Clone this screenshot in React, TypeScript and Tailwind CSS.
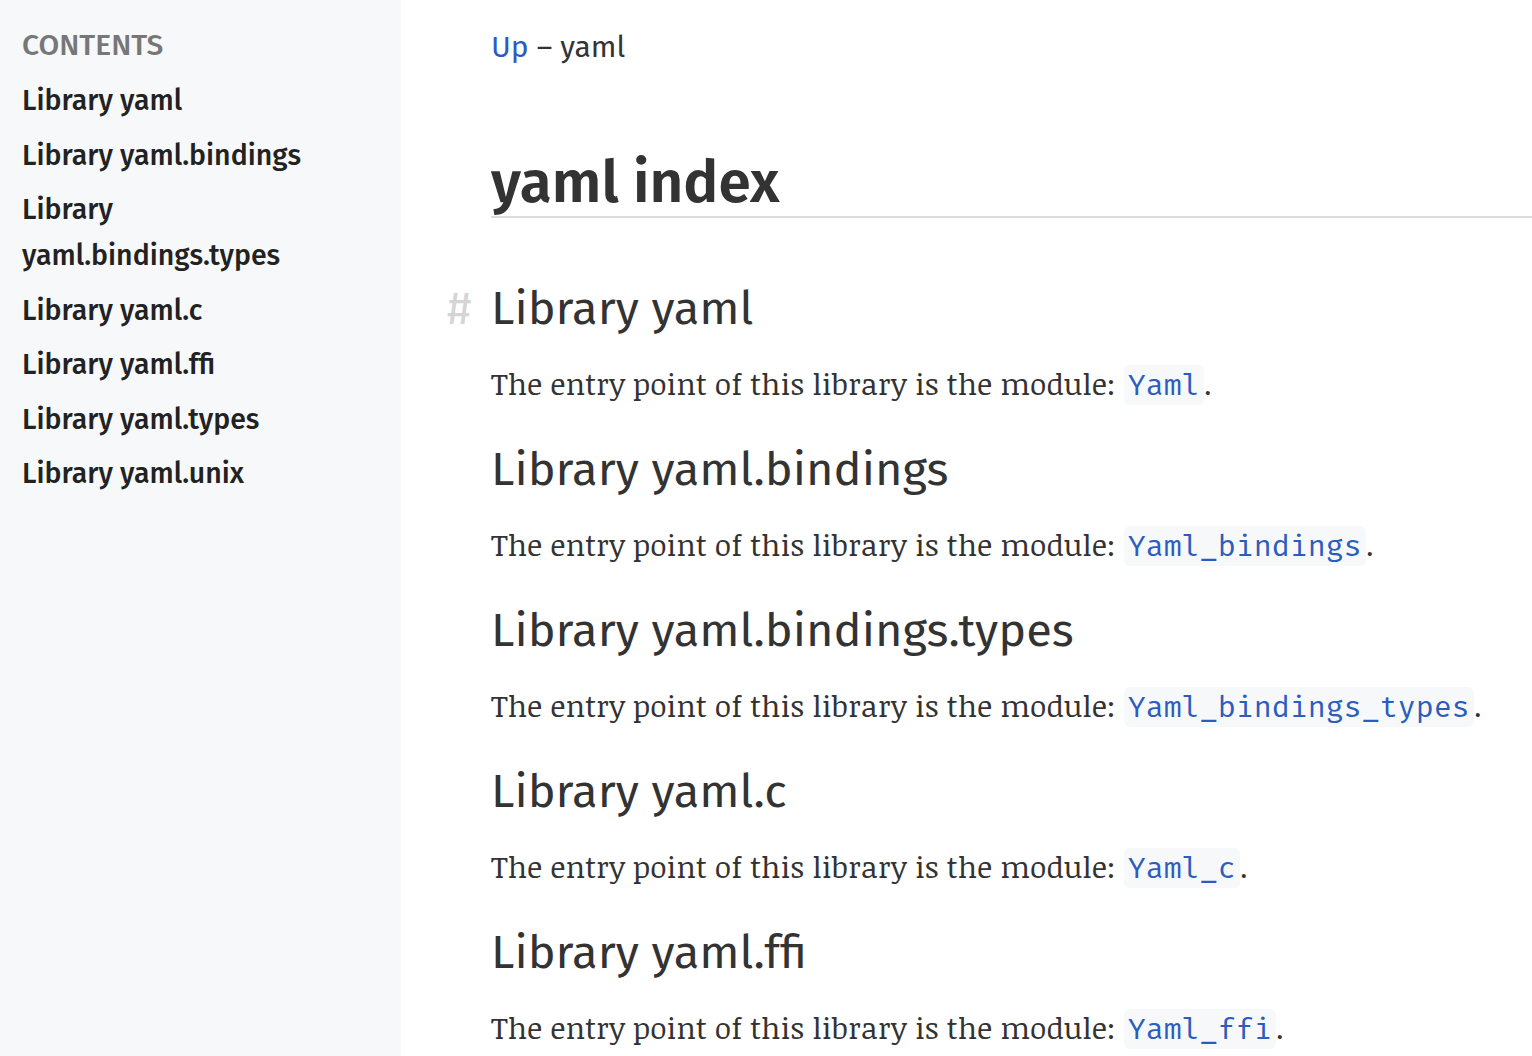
import React from 'react';

const libraries = [
    { name: 'yaml', module: 'Yaml' },
    { name: 'yaml.bindings', module: 'Yaml_bindings' },
    { name: 'yaml.bindings.types', module: 'Yaml_bindings_types' },
    { name: 'yaml.c', module: 'Yaml_c' },
    { name: 'yaml.ffi', module: 'Yaml_ffi' },
    { name: 'yaml.types', module: 'Yaml_types' },
    { name: 'yaml.unix', module: 'Yaml_unix' },
];

const sans = "font-['Fira_Sans','Noto_Sans',sans-serif]";
const serif = "font-['Noticia_Text','DejaVu_Serif',serif]";
const mono = "font-['Fira_Mono','DejaVu_Sans_Mono',monospace]";

const App: React.FC = () => {
    return (
        <div className={`flex h-[1056px] overflow-hidden bg-white text-[#333333] ${sans}`}>
            {/* Sidebar: table of contents */}
            <nav className="w-[401px] shrink-0 bg-[#f6f8fa] pl-[22px] pt-[27px]">
                <div className="text-[30px] leading-[36px] font-medium uppercase text-[#777777]">Contents</div>
                <ul className="mt-[15px] w-[330px] space-y-[8.5px]">
                    {libraries.map((lib) => (
                        <li key={lib.name} className="text-[28.5px] leading-[46px] font-medium text-[#222222]">
                            <a href={`#library-${lib.name}`}>Library {lib.name}</a>
                        </li>
                    ))}
                </ul>
            </nav>

            {/* Main content */}
            <main className="flex-1 pl-[90px] pt-[27px]">
                <nav className="text-[30px] leading-[40px]">
                    <a href="#" className="text-[#2c5cbd]">Up</a> – yaml
                </nav>

                <header className="mt-[84px] border-b-2 border-[#dddddd] pb-[1px]">
                    <h1 className="text-[58.5px] leading-[64px] font-semibold">yaml index</h1>
                </header>

                <div className="mt-[62px]">
                    {libraries.map((lib) => (
                        <section key={lib.name} className="mb-[33px]">
                            <h2 className="relative text-[47px] leading-[56px] font-normal">
                                {lib.name === 'yaml' && (
                                    <a href="#" className="absolute -left-[44px] text-[#d5d5d5]">#</a>
                                )}
                                Library {lib.name}
                            </h2>
                            <p className={`mt-[24px] h-[48px] text-[30px] leading-[48px] ${serif}`}>
                                The entry point of this library is the module:{' '}
                                <a href="#" className={`rounded-md bg-[#f6f8fa] px-[4px] py-[2px] text-[30px] text-[#2c5cbd] ${mono}`}>
                                    {lib.module}
                                </a>
                                .
                            </p>
                        </section>
                    ))}
                </div>
            </main>
        </div>
    );
};

export default App;
